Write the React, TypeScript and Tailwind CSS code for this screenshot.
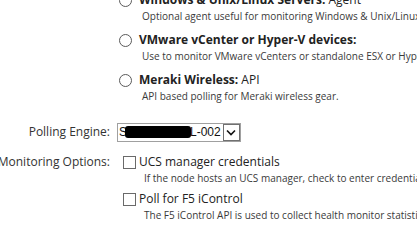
import React from 'react'

function RadioOption({title, suffix, desc}: {title: string, suffix?: string, desc: string}) {
    return (
        <div className="flex flex-col h-[30px] mb-[10px]">
            <div className="flex items-center h-[18px] whitespace-nowrap">
                <span className="w-[13px] h-[13px] rounded-full border border-[#5a5a5a] bg-white shrink-0"></span>
                <span className="ml-[7px] text-[12px] leading-[18px] text-[#222]">
                    <b className="font-bold">{title}</b>{suffix ? <span> {suffix}</span> : null}
                </span>
            </div>
            <div className="ml-[23px] mt-[1px] text-[10px] leading-[12px] text-[#3a3a3a] whitespace-nowrap">{desc}</div>
        </div>
    )
}

function CheckOption({label, desc}: {label: string, desc: string}) {
    return (
        <div className="flex flex-col">
            <div className="flex items-center h-[18px] whitespace-nowrap">
                <span className="ml-[6px] w-[13px] h-[13px] border border-[#6a6a6a] bg-white shrink-0"></span>
                <span className="ml-[3px] text-[12px] leading-[18px] text-[#222]">{label}</span>
            </div>
            <div className="ml-[27px] mt-[1px] text-[10px] leading-[12px] text-[#3a3a3a] whitespace-nowrap">{desc}</div>
        </div>
    )
}

export default function App() {
    return (
        <div className="w-[417px] h-[242px] overflow-hidden bg-white font-['Open_Sans',sans-serif]">
            <div className="-mt-[9px] pl-[119px] flex flex-col">
                <RadioOption title="Windows & Unix/Linux Servers:" suffix="Agent" desc="Optional agent useful for monitoring Windows & Unix/Linux Servers" />
                <RadioOption title="VMware vCenter or Hyper-V devices:" desc="Use to monitor VMware vCenters or standalone ESX or Hyper-V hosts" />
                <RadioOption title="Meraki Wireless:" suffix="API" desc="API based polling for Meraki wireless gear." />
            </div>

            <div className="flex items-center h-[20px] mt-[11px]">
                <div className="w-[110px] flex justify-end whitespace-nowrap text-[12px] text-[#333]">Polling Engine:</div>
                <div className="ml-[7px] flex items-center h-[19px] border border-[#a0a0a0] bg-white font-['Liberation_Sans',sans-serif] text-[12px] text-[#111]">
                    <span className="pl-[1px]">S</span>
                    <span className="w-[66px] h-[12px] bg-black rounded-[3px] -ml-[2px]"></span>
                    <span className="-ml-[1px] pr-[2px]">L-002</span>
                    <span className="w-[17px] h-[17px] border border-[#707070] flex items-center justify-center">
                        <svg width="10" height="7" viewBox="0 0 10 7"><path d="M1 1.5 L5 5.5 L9 1.5" fill="none" stroke="#111" strokeWidth="1.6" /></svg>
                    </span>
                </div>
            </div>

            <div className="flex mt-[11px]">
                <div className="w-[110px] flex justify-end whitespace-nowrap text-[12px] leading-[18px] text-[#333]">Monitoring Options:</div>
                <div className="ml-[7px] flex flex-col gap-[6px]">
                    <CheckOption label="UCS manager credentials" desc="If the node hosts an UCS manager, check to enter credentials" />
                    <CheckOption label="Poll for F5 iControl" desc="The F5 iControl API is used to collect health monitor statistics" />
                </div>
            </div>
        </div>
    )
}
